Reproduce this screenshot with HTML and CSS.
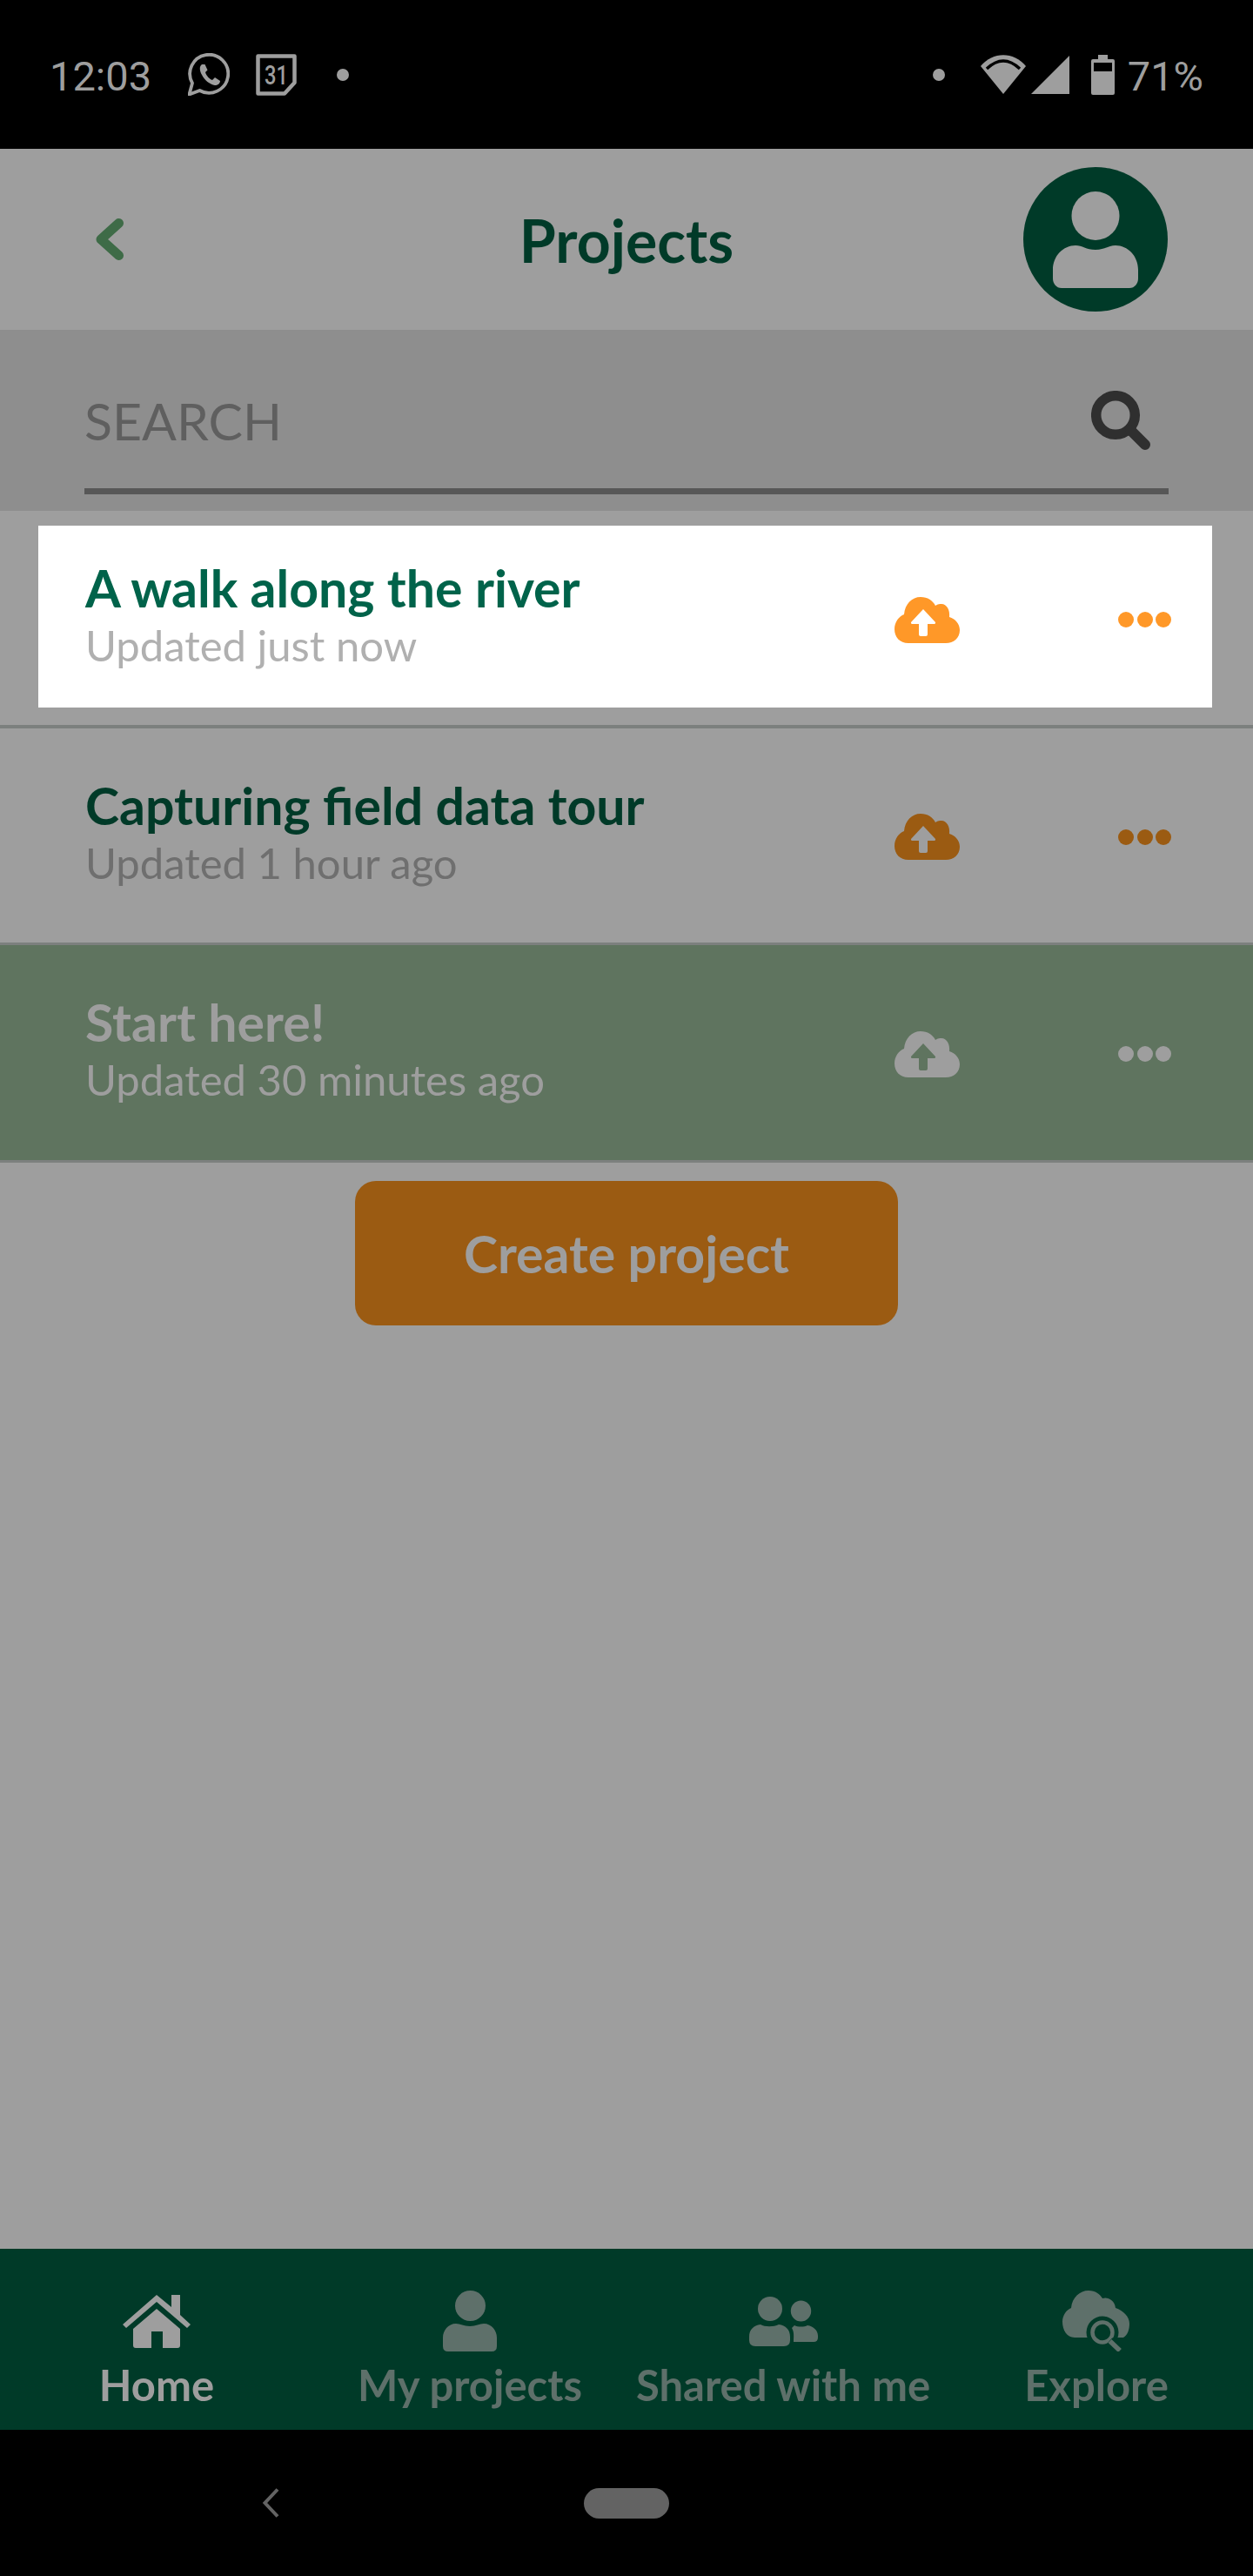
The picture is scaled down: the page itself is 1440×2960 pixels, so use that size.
FILE: index.html
```html
<!doctype html>
<html>
<head>
	<meta charset="utf-8">
	<title>Projects</title>
	<link rel="stylesheet" href="styles.css">
</head>
<body>
<div class="phone">

	<div class="status-bar">
		<div class="status-left">
			<span class="status-time">12:03</span>
			<svg class="ic-whatsapp" viewBox="0 0 48 49" width="48" height="49"><path d="M1.5 47.5 L5 34.500 A22 22 0 1 1 13.500 43 Z" fill="none" stroke="#9e9e9e" stroke-width="3.800" stroke-linejoin="round"/><path d="M16 13 C13 15 13 20 16 25 C19 31 25 36 31 37 C34 37 37 35 37 32 L31 28 L28 31 C25 30 21 26 20 22 L22.500 19.500 L19.500 13 Z" fill="#9e9e9e"/></svg>
			<svg class="ic-calendar" viewBox="0 0 47 48" width="47" height="48"><path d="M2.500 2.500 H44.500 V33 L33 45.500 H2.500 Z" fill="none" stroke="#9e9e9e" stroke-width="4.500" stroke-linejoin="round"/><text x="23.500" y="35" textLength="27" lengthAdjust="spacingAndGlyphs" text-anchor="middle">31</text></svg>
			<span class="status-dot"></span>
		</div>
		<div class="status-right">
			<span class="status-dot"></span>
			<svg class="ic-wifi" viewBox="0 0 52 45" width="52" height="45"><path d="M26 45 L0 13 C14 -4 38 -4 52 13 Z" fill="#9e9e9e"/><path d="M7 16 Q26 -2 45 16" fill="none" stroke="#000" stroke-width="3.500"/></svg>
			<svg class="ic-signal" viewBox="0 0 44 44" width="44" height="44"><path d="M44 0 V44 H0 Z" fill="#9e9e9e"/></svg>
			<svg class="ic-battery" viewBox="0 0 27 46" width="27" height="46"><path d="M8 0 H19 V5 H25 Q27 5 27 7 V44 Q27 46 25 46 H2 Q0 46 0 44 V7 Q0 5 2 5 H8 Z" fill="#9e9e9e"/><rect x="3" y="9" width="21" height="10" fill="#000"/></svg>
			<span class="status-pct">71%</span>
		</div>
	</div>

	<div class="app-header">
		<svg class="ic-back" viewBox="0 0 32 48" width="32" height="48"><path d="M26.500 5.500 L6 24 L26.500 42.500" fill="none" stroke="#3e6b47" stroke-width="11" stroke-linejoin="round" stroke-linecap="round"/></svg>
		<h1 class="app-title">Projects</h1>
		<div class="avatar">
			<svg viewBox="0 0 98 111" width="98" height="111"><ellipse cx="49" cy="28" rx="27.500" ry="28" fill="#9e9e9e"/><path d="M0 100 V90 C0 74 12 62 26 62 C34 62 38 67 49 67 C60 67 64 62 72 62 C86 62 98 74 98 90 V100 C98 106 94 111 88 111 H10 C4 111 0 106 0 100 Z" fill="#9e9e9e"/></svg>
		</div>
	</div>

	<div class="search-band">
		<div class="search-box">
			<span class="search-label">SEARCH</span>
			<svg class="ic-search" viewBox="0 0 69 69" width="69" height="69"><circle cx="28" cy="28" r="22.300" fill="none" stroke="#2f2f2f" stroke-width="11.500"/><path d="M45 45 L62 62" stroke="#2f2f2f" stroke-width="12" stroke-linecap="round"/></svg>
		</div>
	</div>

	<div class="list">
		<div class="row-wrap">
			<div class="row row-active">
				<div class="row-text">
					<div class="row-title">A walk along the river</div>
					<div class="row-sub">Updated just now</div>
				</div>
				<svg class="ic-cloud" viewBox="0 0 75 53" width="75" height="53"><path d="M16 53 C6 53 0 46 0 37 C0 29 5 22 11 20 C12 8 20 0 30 0 C38 0 44 4 47 10 C50 8 52 8 54 8 C60 8 64 15 63 23 C70 25 75 31 75 38 C75 47 68 53 59 53 Z" fill="#ff9828"/><path d="M33 14 L47 29 Q47.500 31 45 31 H38 V43 Q38 45 36 45 H30 Q28 45 28 43 V31 H21 Q18.500 31 19 29 Z" fill="#fff"/></svg>
				<div class="dots"><i></i><i></i><i></i></div>
			</div>
		</div>
		<div class="row row-plain">
			<div class="row-text">
				<div class="row-title">Capturing field data tour</div>
				<div class="row-sub">Updated 1 hour ago</div>
			</div>
			<svg class="ic-cloud" viewBox="0 0 75 53" width="75" height="53"><path d="M16 53 C6 53 0 46 0 37 C0 29 5 22 11 20 C12 8 20 0 30 0 C38 0 44 4 47 10 C50 8 52 8 54 8 C60 8 64 15 63 23 C70 25 75 31 75 38 C75 47 68 53 59 53 Z" fill="#9b5b12"/><path d="M33 14 L47 29 Q47.500 31 45 31 H38 V43 Q38 45 36 45 H30 Q28 45 28 43 V31 H21 Q18.500 31 19 29 Z" fill="#9e9e9e"/></svg>
			<div class="dots"><i></i><i></i><i></i></div>
		</div>
		<div class="row row-green">
			<div class="row-text">
				<div class="row-title">Start here!</div>
				<div class="row-sub">Updated 30 minutes ago</div>
			</div>
			<svg class="ic-cloud" viewBox="0 0 75 53" width="75" height="53"><path d="M16 53 C6 53 0 46 0 37 C0 29 5 22 11 20 C12 8 20 0 30 0 C38 0 44 4 47 10 C50 8 52 8 54 8 C60 8 64 15 63 23 C70 25 75 31 75 38 C75 47 68 53 59 53 Z" fill="#9e9e9e"/><path d="M33 14 L47 29 Q47.500 31 45 31 H38 V43 Q38 45 36 45 H30 Q28 45 28 43 V31 H21 Q18.500 31 19 29 Z" fill="#5f745f"/></svg>
			<div class="dots"><i></i><i></i><i></i></div>
		</div>
	</div>

	<div class="create-wrap">
		<div class="create-btn">Create project</div>
	</div>

	<div class="tabbar">
		<div class="tab tab-on">
			<div class="tab-icon"><svg viewBox="0 0 78 61" width="78" height="61"><path d="M39 0 L56 14 V0 H66 V23 L78 34 L74 38 L39 8 L4 38 L0 34 Z" fill="currentColor"/><path d="M39 16 L12 39 V58 Q12 61 15 61 H33 V42 H46 V61 H63 Q66 61 66 58 V39 Z" fill="currentColor"/></svg></div>
			<span>Home</span>
		</div>
		<div class="tab">
			<div class="tab-icon"><svg viewBox="0 0 62 70" width="62" height="70"><ellipse cx="31.500" cy="17.500" rx="17.500" ry="17.500" fill="currentColor"/><path d="M0 64 V54 C0 46 6 38 15 38 C20 38 24 41 31 41 C38 41 42 38 47 38 C56 38 62 46 62 54 V64 Q62 70 56 70 H6 Q0 70 0 64 Z" fill="currentColor"/></svg></div>
			<span>My projects</span>
		</div>
		<div class="tab">
			<div class="tab-icon"><svg viewBox="0 0 79 57" width="79" height="57"><ellipse cx="24" cy="14" rx="14" ry="14" fill="currentColor"/><ellipse cx="59.500" cy="16.500" rx="11.700" ry="12" fill="currentColor"/><path d="M0 50 V46 C0 38 5 33 13 32 C18 35 28 35 34 32 C42 33 47 38 47 46 V50 Q47 57 40 57 H7 Q0 57 0 50 Z" fill="currentColor"/><path d="M49 36 C50 35 51 34 52 33 C56 35 63 35 67 33 C74 34 79 39 79 45 V47 Q79 52 74 52 H51 C51 46 52 41 49 36 Z" fill="currentColor"/></svg></div>
			<span>Shared with me</span>
		</div>
		<div class="tab">
			<div class="tab-icon"><svg viewBox="0 0 78 70" width="78" height="70"><path d="M14 54 C5 54 0 45 0 36 C0 28 5 22 10 20 C11 8 20 0 30 0 C38 0 43 4 46 9 C52 7 60 11 61 20 C70 23 77 30 77 38 C77 45 75 51 70 54 Z" fill="currentColor"/><circle cx="46" cy="48" r="18.500" fill="#003a28"/><circle cx="46" cy="48" r="11.500" fill="none" stroke="currentColor" stroke-width="4.500"/><path d="M54 58 L66 69" stroke="#003a28" stroke-width="10"/><path d="M54.500 58 L66 69" stroke="currentColor" stroke-width="5.500"/></svg></div>
			<span>Explore</span>
		</div>
	</div>

	<div class="nav-bar">
		<svg class="nav-back" viewBox="0 0 20 34" width="20" height="34"><path d="M18 1.500 L3.500 17 L18 32.500" fill="none" stroke="#636363" stroke-width="4"/></svg>
		<span class="nav-pill"></span>
	</div>

</div>
</body>
</html>
```

FILE: styles.css
```css
* { box-sizing: border-box; }
html, body { margin: 0; padding: 0; }
body { background: #9e9e9e; font-family: "Lato", "Noto Sans", sans-serif; }

.phone { width: 1440px; height: 2960px; display: flex; flex-direction: column; background: #9e9e9e; overflow: hidden; }

/* status bar */
.status-bar { height: 171px; background: #000; color: #9e9e9e; display: flex; justify-content: space-between; align-items: center; padding: 0 57px; font-family: "Roboto", sans-serif; font-size: 47px; }
.status-left, .status-right { display: flex; align-items: center; }
.status-time { margin-right: 42px; position: relative; top: 2px; }
.ic-whatsapp { margin-right: 30px; }
.ic-calendar { margin-right: 46px; }
.ic-calendar text { font-family: "Roboto", sans-serif; font-size: 32px; font-weight: 500; fill: #9e9e9e; }
.status-dot { width: 14px; height: 14px; border-radius: 50%; background: #9e9e9e; }
.status-right .status-dot { margin-right: 41px; }
.ic-wifi { margin-right: 6px; }
.ic-signal { margin-right: 25px; }
.ic-battery { margin-right: 15px; }
.status-pct { position: relative; top: 2px; }

/* header */
.app-header { height: 208px; display: grid; grid-template-columns: 1fr auto 1fr; align-items: center; padding: 0 98px; }
.ic-back { margin-left: 12px; }
.app-title { margin: 0; font-size: 68px; font-weight: 700; color: #003a28; }
.avatar { width: 166px; height: 166px; border-radius: 50%; background: #003a28; display: flex; align-items: center; justify-content: center; justify-self: end; }

/* search */
.search-band { height: 208px; background: #8e8e8e; padding: 0 97px; }
.search-box { height: 189px; border-bottom: 7px solid #575757; display: flex; align-items: center; justify-content: space-between; padding: 26px 20px 0 0; }
.search-label { font-size: 59px; color: #5f5f5f; }

/* project rows */
.row { display: flex; align-items: center; height: 249px; padding: 0 94px 4px 98px; border-bottom: 3px solid #7c807e; }
.row-wrap { height: 250px; padding: 17px 47px 0 44px; border-bottom: 4px solid #7c807e; }
.row-active { background: #fff; height: 209px; border: 0; padding: 0 47px 0 54px; }
.row-text { flex: 1; }
.row-title { font-size: 59px; font-weight: 700; line-height: 66px; color: #003a28; }
.row-sub { font-size: 49px; line-height: 65px; color: #6f6f6f; }
.row-active .row-title { color: #00634a; }
.row-active .row-sub { color: #b0b0b0; }
.row-green { height: 250px; background: #5f745f; }
.row-green .row-title, .row-green .row-sub { color: #9e9e9e; }
.ic-cloud { margin-right: 182px; margin-top: 7px; }
.dots { display: flex; gap: 3.5px; margin-top: 7px; }
.dots i { width: 18px; height: 18px; border-radius: 50%; background: #ff9828; }
.row-plain .dots i { background: #9b5b12; }
.row-green .dots i { background: #9e9e9e; }

/* create button */
.create-wrap { flex: 1; display: flex; justify-content: center; align-items: flex-start; padding-top: 21px; }
.create-btn { width: 624px; height: 166px; border-radius: 24px; background: #9b5b12; color: #9e9e9e; font-size: 59px; font-weight: 700; display: flex; align-items: center; justify-content: center; }

/* tabs */
.tabbar { height: 208px; background: #003a28; color: #5e706a; display: flex; }
.tab { width: 360px; display: flex; flex-direction: column; align-items: center; padding-top: 48px; font-size: 49px; font-weight: 700; line-height: 56px; }
.tab-icon { height: 70px; margin-bottom: 10px; display: flex; align-items: center; }
.tab-on { color: #9e9e9e; }

/* android nav */
.nav-bar { height: 168px; background: #000; display: flex; align-items: center; padding-left: 301px; }
.nav-pill { width: 98px; height: 35px; border-radius: 18px; background: #636363; margin-left: 350px; }
```
